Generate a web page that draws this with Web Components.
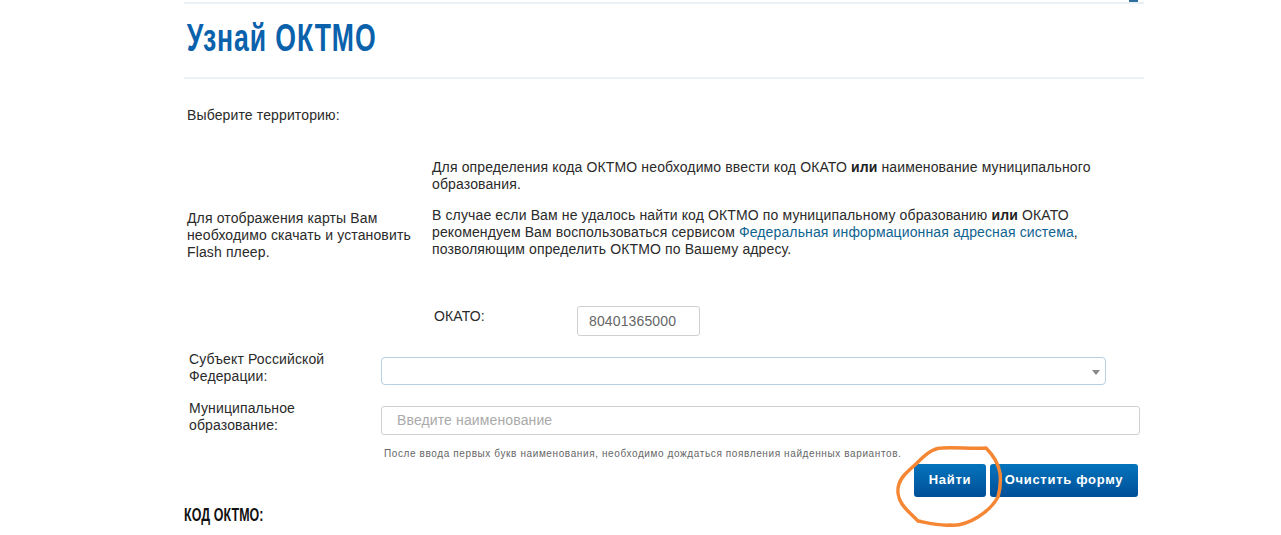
<!DOCTYPE html>
<html lang="ru"><head><meta charset="utf-8"><style>
html,body{margin:0;padding:0;background:#fff;overflow:hidden}
body{font:14px/17px "Liberation Sans",Arial,sans-serif;color:#2a2a2a;letter-spacing:.13px}
</style></head><body>
<oktmo-page></oktmo-page>
<script>
const def=(n,css,html)=>customElements.define(n,class extends HTMLElement{constructor(){super();this.attachShadow({mode:'open'}).innerHTML=`<style>${css}</style>${html}`}});
def('page-title',`:host{display:block;height:77px;border-top:2px solid #e9f0f6;border-bottom:2px solid #e9f0f6;position:relative;box-sizing:border-box}
h1{margin:0;padding:13px 0 0 4px;font:700 38px/42px "Liberation Sans Narrow","Liberation Sans",sans-serif;color:#0a62ac;transform:scaleX(.7);transform-origin:0 0;white-space:nowrap;letter-spacing:1.3px}
i{position:absolute;left:945px;top:-4px;width:9px;height:2px;background:#2f6f9f}`,`<i></i><h1><slot></slot></h1>`);
def('intro-block',`:host{display:grid;grid-template-columns:245px 1fr;padding:0 3px;margin-top:28px}
.l p{margin:0}.sel{height:64px}
.flash{margin-top:39px!important;width:235px}
.r{padding-top:52px;width:672px}
.r p{margin:0 0 14px}
a{color:#0f6390;text-decoration:none}b{color:#222}`,
`<div class="l"><p class="sel">Выберите территорию:</p><p class="flash">Для отображения карты Вам необходимо скачать и установить Flash плеер.</p></div>
<div class="r"><p>Для определения кода ОКТМО необходимо ввести код ОКАТО <b>или</b> наименование муниципального образования.</p>
<p>В случае если Вам не удалось найти код ОКТМО по муниципальному образованию <b>или</b> ОКАТО рекомендуем Вам воспользоваться сервисом <a href="#">Федеральная информационная адресная система</a>, позволяющим определить ОКТМО по Вашему адресу.</p></div>`);
def('okato-row',`:host{display:flex;margin:34px 0 0 250px;height:30px}
span{width:143px;padding-top:2px;line-height:17px}
div{width:123px;height:30px;box-sizing:border-box;border:1px solid #d0d0d0;border-radius:3px;color:#666;padding:5px 11px;line-height:18px}`,`<span>ОКАТО:</span><div>80401365000</div>`);
def('form-row',`:host{display:flex;padding-left:5px}
label{width:192px;line-height:17px;flex:none;margin-top:-6px}
::slotted(span){display:block;width:150px}
::slotted(select-box),::slotted(text-box){flex:none}`,`<label><slot name="label"></slot></label><slot></slot>`);
def('select-box',`:host{display:block;width:725px;height:28px;box-sizing:border-box;border:1px solid #b7cfe0;border-radius:4px;position:relative}
i{position:absolute;right:5px;top:12px;border:4px solid transparent;border-top:5px solid #888;border-bottom:0}`,`<i></i>`);
def('text-box',`:host{display:block;width:759px;height:29px;box-sizing:border-box;border:1px solid #d0d0d0;border-radius:3px;color:#aaa;padding:4px 15px;font-size:14px;line-height:18px}`,`<slot></slot>`);
def('blue-btn',`:host{display:block;height:33px;box-sizing:border-box;border-radius:3px;background:linear-gradient(#0474bd,#004f97);color:#fff;font:700 13px/32px "Liberation Sans",sans-serif;text-align:center;letter-spacing:.7px}`,`<slot></slot>`);
def('oktmo-page',`:host{display:block;width:960px;margin:2px 0 0 184px;position:relative;height:533px}
.hint{margin:12px 0 0 200px;font-size:10px;line-height:14px;color:#666;letter-spacing:.61px;white-space:nowrap}
.rows{margin-top:21px;display:flex;flex-direction:column;gap:21px}
.btns{display:flex;gap:4px;position:absolute;left:730px;top:462px}
.code{position:absolute;left:0;top:503px;font:700 18px/20px "Liberation Sans Narrow","Liberation Sans",sans-serif;color:#111;transform:scaleX(.69);transform-origin:0 0;white-space:nowrap}
svg{position:absolute;left:0;top:0;pointer-events:none}`,
`<page-title>Узнай ОКТМО</page-title><intro-block></intro-block><okato-row></okato-row>
<div class="rows"><form-row><span slot="label">Субъект Российской Федерации:</span><select-box></select-box></form-row>
<form-row><span slot="label">Муниципальное образование:</span><text-box>Введите наименование</text-box></form-row></div>
<div class="hint">После ввода первых букв наименования, необходимо дождаться появления найденных вариантов.</div>
<div class="btns"><blue-btn style="width:72px">Найти</blue-btn><blue-btn style="width:148px">Очистить форму</blue-btn></div>
<div class="code">КОД ОКТМО:</div>
<svg width="960" height="533" viewBox="184 2 960 533"><path d="M917 463C924 456 932 448 942 448C955 447 972 449 986 448C992 454 998 462 1000 473C1001 482 1000 490 998 497C993 506 986 512 978 517C970 522 960 526 950 525C940 526 928 523 918 521C912 515 906 510 902 504C898 498 897 490 899 484C901 477 908 471 917 463Z" fill="none" stroke="#f58634" stroke-width="3.5" stroke-linejoin="round"/></svg>`);
</script></body></html>
